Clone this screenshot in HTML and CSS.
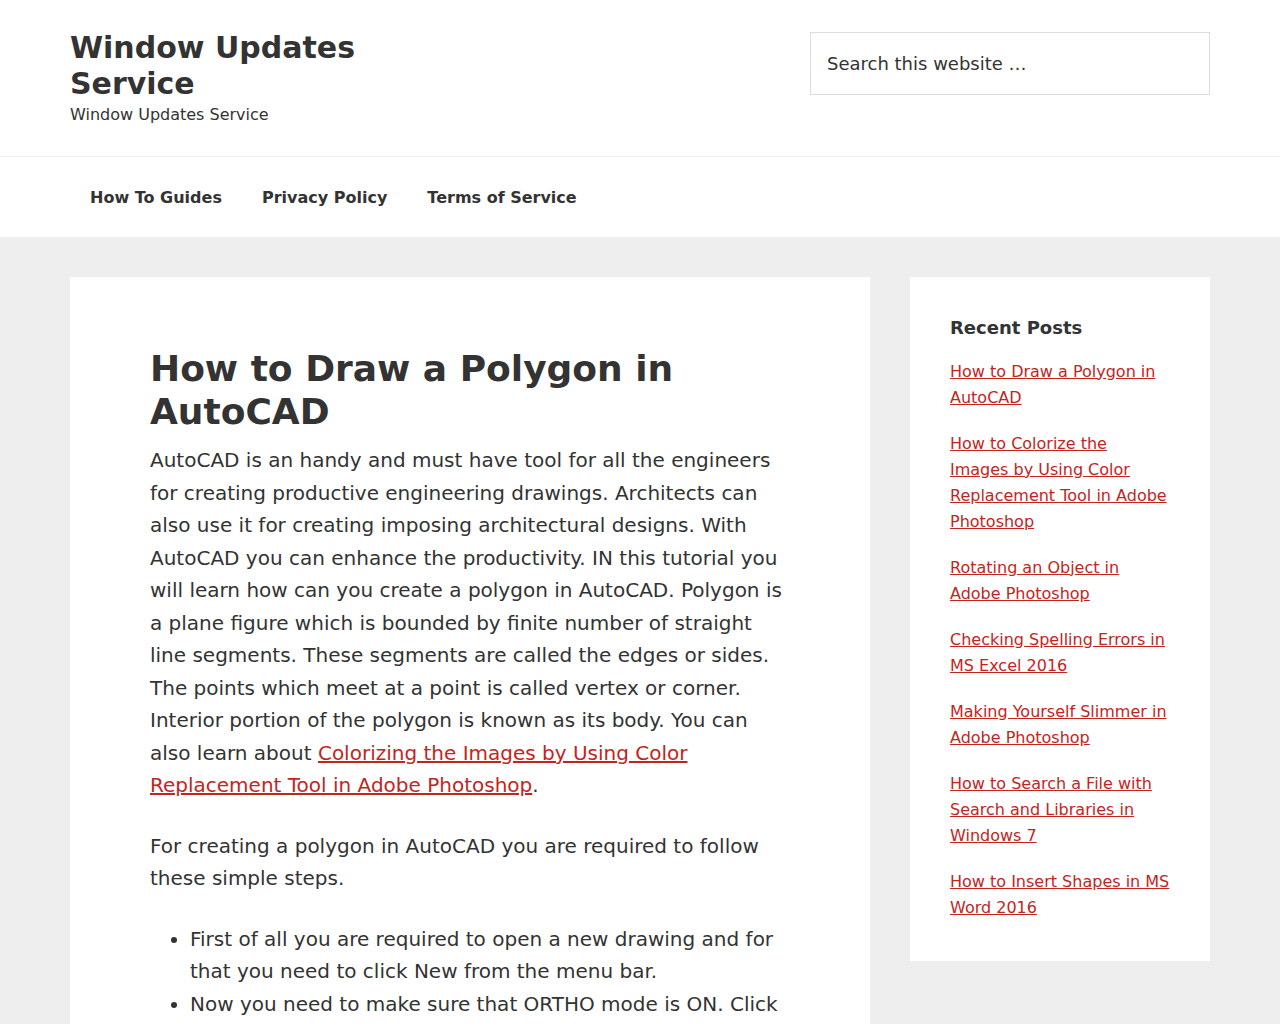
FILE: index.html
```html
<!DOCTYPE html>
<html lang="en">
<head>
  <meta charset="UTF-8">
  <meta name="viewport" content="width=device-width, initial-scale=1.0">
  <title>How to Draw a Polygon in AutoCAD - Window Updates Service</title>
  <link rel="stylesheet" href="styles.css">
</head>
<body>
  <header class="site-header">
    <div class="wrap header-wrap">
      <div class="title-area">
        <p class="site-title"><a href="#">Window Updates Service</a></p>
        <p class="site-description">Window Updates Service</p>
      </div>
      <form class="search-form">
        <input type="search" class="search-input" placeholder="Search this website …">
      </form>
    </div>
  </header>

  <nav class="nav-primary">
    <div class="wrap">
      <ul class="menu">
        <li><a href="#">How To Guides</a></li>
        <li><a href="#">Privacy Policy</a></li>
        <li><a href="#">Terms of Service</a></li>
      </ul>
    </div>
  </nav>

  <div class="site-inner">
    <div class="wrap content-sidebar">
      <main class="content">
        <article class="entry">
          <h1 class="entry-title">How to Draw a Polygon in AutoCAD</h1>
          <p>AutoCAD is an handy and must have tool for all the engineers for creating productive engineering drawings. Architects can also use it for creating imposing architectural designs. With AutoCAD you can enhance the productivity. IN this tutorial you will learn how can you create a polygon in AutoCAD. Polygon is a plane figure which is bounded by finite number of straight line segments. These segments are called the edges or sides. The points which meet at a point is called vertex or corner. Interior portion of the polygon is known as its body. You can also learn about <a href="#">Colorizing the Images by Using Color Replacement Tool in Adobe Photoshop</a>.</p>
          <p>For creating a polygon in AutoCAD you are required to follow these simple steps.</p>
          <ul>
            <li>First of all you are required to open a new drawing and for that you need to click New from the menu bar.</li>
            <li>Now you need to make sure that ORTHO mode is ON. Click on the ORTHO button in the status bar to turn it on.</li>
          </ul>
        </article>
      </main>

      <aside class="sidebar">
        <section class="widget">
          <h3 class="widget-title">Recent Posts</h3>
          <ul>
            <li><a href="#">How to Draw a Polygon in AutoCAD</a></li>
            <li><a href="#">How to Colorize the Images by Using Color Replacement Tool in Adobe Photoshop</a></li>
            <li><a href="#">Rotating an Object in Adobe Photoshop</a></li>
            <li><a href="#">Checking Spelling Errors in MS Excel 2016</a></li>
            <li><a href="#">Making Yourself Slimmer in Adobe Photoshop</a></li>
            <li><a href="#">How to Search a File with Search and Libraries in Windows 7</a></li>
            <li><a href="#">How to Insert Shapes in MS Word 2016</a></li>
          </ul>
        </section>
      </aside>
    </div>
  </div>
</body>
</html>
```

FILE: styles.css
```css
* {
  box-sizing: border-box;
}

body {
  margin: 0;
  font-family: "DejaVu Sans", sans-serif;
  font-size: 20px;
  line-height: 1.625;
  color: #333;
  background: #eee;
}

a {
  color: #c3251d;
}

.wrap {
  max-width: 1140px;
  margin: 0 auto;
}

/* Header */
.site-header {
  background: #fff;
}

.header-wrap {
  display: flex;
  justify-content: space-between;
  align-items: flex-start;
}

.title-area {
  width: 320px;
  padding: 30px 0 28px;
}

.site-title {
  margin: 0;
  font-size: 30px;
  font-weight: 700;
  line-height: 1.2;
}

.site-title a {
  color: #333;
  text-decoration: none;
}

.site-description {
  margin: 0;
  font-size: 16px;
  line-height: 26px;
}

.search-form {
  width: 400px;
  margin-top: 32px;
}

.search-input {
  width: 100%;
  height: 63px;
  padding: 0 16px;
  border: 1px solid #ddd;
  font-family: inherit;
  font-size: 18px;
  color: #333;
  background: #fff;
  outline: none;
}

.search-input::placeholder {
  color: #333;
  opacity: 1;
}

/* Navigation */
.nav-primary {
  background: #fff;
  border-top: 1px solid #eee;
}

.menu {
  display: flex;
  margin: 0;
  padding: 0;
  list-style: none;
}

.menu a {
  display: block;
  padding: 28px 20px 26px;
  font-size: 16px;
  font-weight: 700;
  line-height: 26px;
  color: #333;
  text-decoration: none;
}

/* Content */
.site-inner {
  padding-top: 40px;
}

.content-sidebar {
  display: flex;
  justify-content: space-between;
  align-items: flex-start;
}

.content {
  width: 800px;
}

.entry {
  background: #fff;
  padding: 70px 80px 40px;
}

.entry-title {
  margin: 0 0 11px;
  font-size: 36px;
  line-height: 1.2;
  font-weight: 700;
}

.entry p {
  margin: 0 0 28px;
}

.entry ul {
  margin: 0;
  padding-left: 40px;
}

/* Sidebar */
.sidebar {
  width: 300px;
  background: #fff;
  padding: 40px;
  font-size: 16px;
  line-height: 26px;
}

.widget-title {
  margin: 0 0 20px;
  font-size: 18px;
  line-height: 1.2;
  font-weight: 700;
}

.widget ul {
  margin: 0;
  padding: 0;
  list-style: none;
}

.widget li {
  margin-bottom: 20px;
}

.widget li:last-child {
  margin-bottom: 0;
}
```
